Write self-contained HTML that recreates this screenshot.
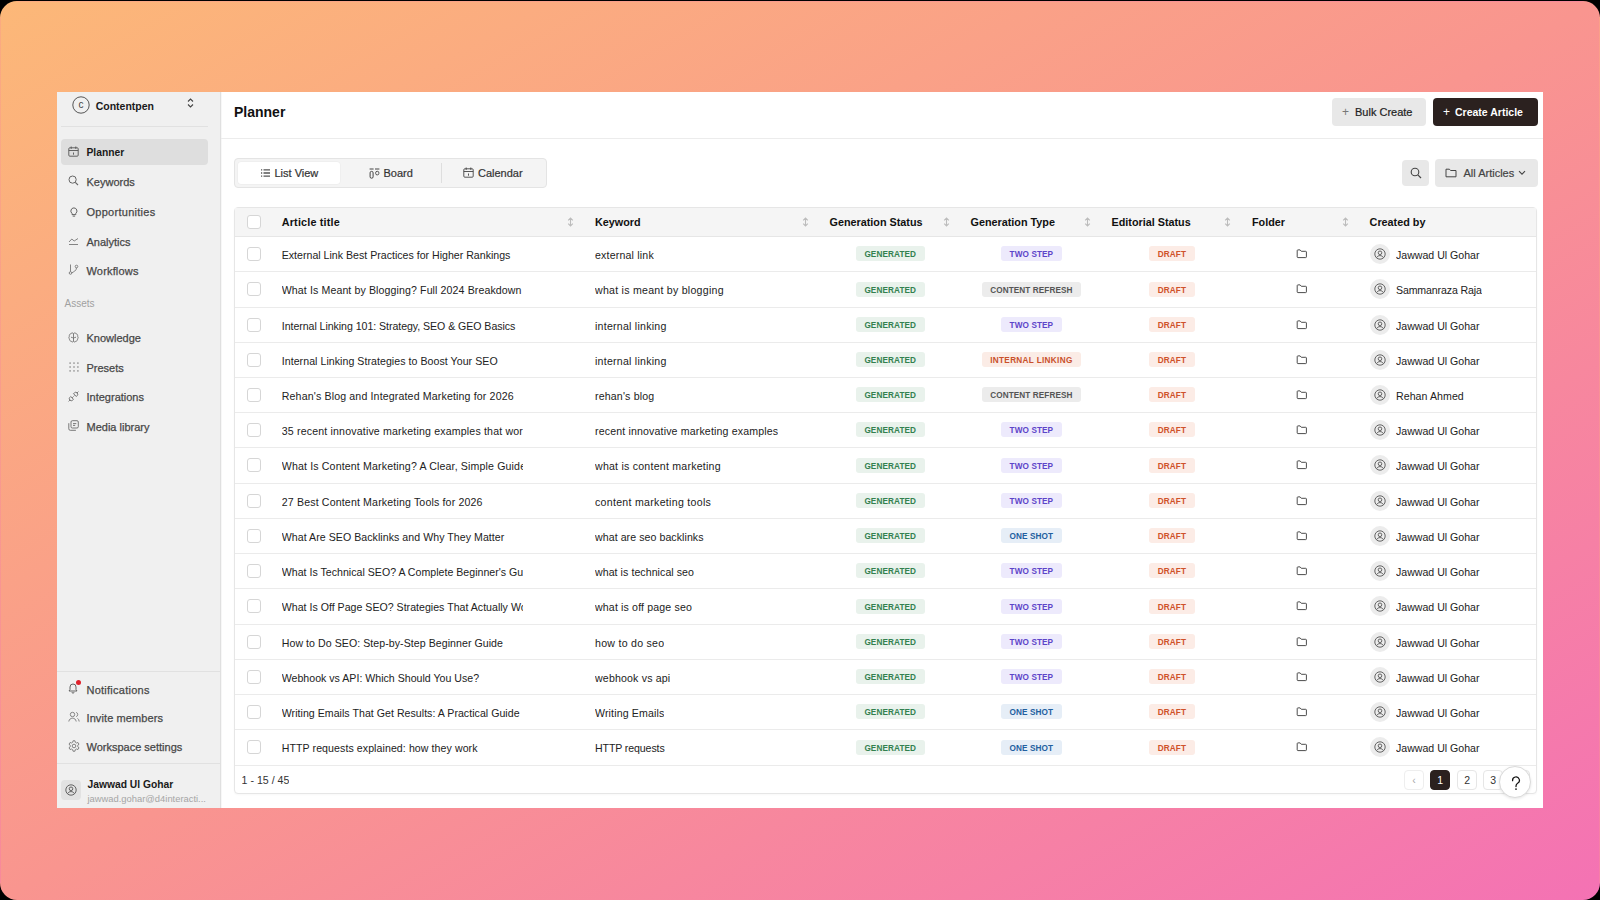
<!DOCTYPE html>
<html><head><meta charset="utf-8">
<style>
*{margin:0;padding:0;box-sizing:border-box}
html,body{width:1600px;height:900px;overflow:hidden;background:#000}
body{position:relative;font-family:"Liberation Sans",sans-serif;color:#1f1f1f}
.frame{position:absolute;left:0;top:1px;width:1600px;height:899px;border-radius:17px;background:linear-gradient(to bottom right,#fcb878 0%,#f9958f 50%,#f472b4 100%)}
.app{position:absolute;left:57px;top:92px;width:1486px;height:716px;background:#fff;overflow:hidden}
.abs{position:absolute}
svg{display:block}
/* sidebar */
.side{position:absolute;left:57px;top:92px;width:164px;height:716px;background:#f0f0f0;border-right:1px solid #e0e0e0;box-shadow:1px 0 0 #f7f7f7;overflow:hidden}
.nav{position:absolute;left:86.5px;font-size:11px;color:#474747;white-space:nowrap;line-height:14px;-webkit-text-stroke:0.25px #474747}
.nico{position:absolute;left:67px}
.sep{position:absolute;height:1px;background:#e1e1e1}
/* main */
.title{position:absolute;left:234px;top:102.6px;font-size:14px;font-weight:bold;color:#111;line-height:18px}
.hdrline{position:absolute;left:221px;top:138px;width:1322px;height:1px;background:#ececec}
.btn{position:absolute;border-radius:4px;font-size:11px;line-height:14px;white-space:nowrap}
.tabs{position:absolute;left:234px;top:158px;width:313px;height:30px;background:#f4f4f4;border:1px solid #e4e4e4;border-radius:4px}
.tab{position:absolute;font-size:11px;color:#333;line-height:14px;white-space:nowrap;-webkit-text-stroke:0.2px #333}
/* table */
.tbl{position:absolute;left:234px;top:207px;width:1303px;height:586.5px;border:1px solid #e6e6e6;border-radius:4px;overflow:hidden;background:#fff;box-shadow:0 1px 2px rgba(0,0,0,0.03)}
.thbg{position:absolute;left:235px;top:208px;width:1301px;height:28px;background:#f5f5f5}
.hline{position:absolute;left:235px;top:236px;width:1301px;height:1px;background:#e6e6e6}
.th{position:absolute;top:215px;font-size:10.8px;font-weight:bold;color:#111;line-height:14px;white-space:nowrap}
.srt{position:absolute;top:217.4px}
.rb{position:absolute;left:235px;width:1301px;height:1px;background:#ebebeb}
.cb{position:absolute;left:247px;width:14px;height:14px;border:1px solid #d6d6d6;border-radius:3px;background:#fff}
.tt{position:absolute;font-size:10.6px;color:#222;line-height:14px;white-space:nowrap;overflow:hidden}
.ttl{left:281.75px;width:241.1px}
.kw{left:595px}
.who{left:1396px}
.bd{position:absolute;height:14.8px;border-radius:3px;font-size:8.2px;font-weight:bold;line-height:18.4px;text-align:center;white-space:nowrap;letter-spacing:0.1px}
.gen{left:856px;width:68.5px;background:#e9f2ec;color:#33814f}
.dr{left:1149.25px;width:45.25px;background:#fcece6;color:#cf5229}
.t2{background:#edeafc;color:#5d45c9}
.tc{background:#ececec;color:#555}
.ti{background:#fbece6;color:#c9502a;letter-spacing:0.33px}
.t1{background:#e6eef7;color:#22609f}
.fo{position:absolute;left:1295.5px}
.av{position:absolute;left:1369.5px;width:20px;height:20px;border-radius:50%;background:#ececec;display:flex;align-items:center;justify-content:center}
.pg{position:absolute;top:769.5px;width:19.5px;height:20px;border:1px solid #e6e6e6;border-radius:4px;font-size:10.5px;line-height:18px;text-align:center;color:#333;background:#fff}
</style></head>
<body>
<div class="frame"></div>
<div class="abs" style="left:0;top:17px;width:1px;height:866px;background:linear-gradient(to bottom,#fbab80,#faa287,#f99a8e,#f89295,#f8899b)"></div>
<div class="abs" style="left:1599px;top:17px;width:1px;height:866px;background:linear-gradient(to bottom,#faa188,#f99890,#f89097,#f7889e,#f67fa7)"></div>
<div class="abs" style="left:17px;top:1px;width:1566px;height:1px;background:linear-gradient(to right,#fbab81,#faa387,#f99a8e,#f89295,#f7899c)"></div>
<div class="app"></div>

<!-- SIDEBAR -->
<div class="side"></div>
<svg class="abs" style="left:71.5px;top:96px" width="18" height="18" viewBox="0 0 18 18"><circle cx="9" cy="9" r="8.2" fill="none" stroke="#555" stroke-width="1"/><text x="9" y="12.4" font-size="10" text-anchor="middle" fill="#444" font-family="Liberation Sans">c</text></svg>
<div class="nav" style="left:95.7px;top:98.5px;font-weight:bold;color:#1a1a1a;font-size:10.5px;-webkit-text-stroke:0">Contentpen</div>
<svg class="abs" style="left:187px;top:98px" width="7" height="10" viewBox="0 0 7 10"><path d="M1 3.5L3.5 1 6 3.5M1 6.5L3.5 9 6 6.5" fill="none" stroke="#444" stroke-width="1.1"/></svg>
<div class="sep" style="left:61px;top:126px;width:147px"></div>

<div class="abs" style="left:61px;top:139.2px;width:146.7px;height:25.5px;background:#dedede;border-radius:4px"></div>
<!-- planner icon -->
<svg class="nico" style="top:146px;left:68px" width="11" height="11" viewBox="0 0 11 11"><rect x="0.8" y="1.8" width="9.4" height="8.4" rx="1" fill="none" stroke="#555" stroke-width="0.9"/><path d="M0.8 4.5h9.4M3.2 0.5v2.4M7.8 0.5v2.4M5.5 6.5v2.2" fill="none" stroke="#555" stroke-width="0.9"/></svg>
<div class="nav" style="top:145.5px;color:#1a1a1a;font-weight:bold;font-size:10.3px;-webkit-text-stroke:0">Planner</div>

<svg class="nico" style="top:175px;left:68px" width="11" height="11" viewBox="0 0 11 11"><circle cx="4.6" cy="4.6" r="3.6" fill="none" stroke="#666" stroke-width="1"/><path d="M7.3 7.3L10 10" stroke="#666" stroke-width="1.1"/></svg>
<div class="nav" style="top:174.5px">Keywords</div>

<svg class="nico" style="top:206.5px;left:69px" width="10" height="10" viewBox="0 0 10 10"><path d="M4.9 0.9a3.1 3.1 0 0 1 1.9 5.5v1.2H3V6.4A3.1 3.1 0 0 1 4.9 0.9zM3.7 9.1h2.4" fill="none" stroke="#5a5a5a" stroke-width="0.95" stroke-linejoin="round"/></svg>
<div class="nav" style="top:204.5px;letter-spacing:0.27px">Opportunities</div>

<svg class="nico" style="top:235px;left:68px" width="11" height="11" viewBox="0 0 11 11"><path d="M1 9.5h9M1 7l2.8-3 2.4 2L10 3.5" fill="none" stroke="#777" stroke-width="0.9"/></svg>
<div class="nav" style="top:234.5px">Analytics</div>

<svg class="nico" style="top:264px;left:68px" width="11" height="11" viewBox="0 0 11 11"><circle cx="2.5" cy="9" r="1.3" fill="none" stroke="#777" stroke-width="0.9"/><circle cx="8.5" cy="2.5" r="1.3" fill="none" stroke="#777" stroke-width="0.9"/><path d="M2.5 0.5v7.2M8.5 3.8c0 3-3 4-4.6 5" fill="none" stroke="#777" stroke-width="0.9"/></svg>
<div class="nav" style="top:264px;letter-spacing:0.17px">Workflows</div>

<div class="nav" style="left:64.5px;top:297px;color:#a0a0a0;font-size:10px;-webkit-text-stroke:0">Assets</div>

<svg class="nico" style="top:331.6px;left:68px" width="11" height="11" viewBox="0 0 11 11"><path d="M5.5 1.6C5 0.7 3.2 0.6 2.7 1.9 1.5 2 1 3.3 1.5 4.2 0.6 4.9 0.7 6.4 1.6 6.9 1.2 8 2 9.3 3.2 9.1 3.7 10.2 5 10.3 5.5 9.3 6 10.3 7.3 10.2 7.8 9.1 9 9.3 9.8 8 9.4 6.9 10.3 6.4 10.4 4.9 9.5 4.2 10 3.3 9.5 2 8.3 1.9 7.8 0.6 6 0.7 5.5 1.6zM5.5 1.6v7.7M3 5.2c1 0 1.8 0.5 2.5 1.3M8 5.2c-1 0-1.8 0.5-2.5 1.3" fill="none" stroke="#6a6a6a" stroke-width="0.85" stroke-linejoin="round"/></svg>
<div class="nav" style="top:331px">Knowledge</div>

<svg class="nico" style="top:361.5px;left:68.5px" width="10" height="10" viewBox="0 0 10 10"><g fill="#8a8a8a"><rect x="0.4" y="0.4" width="1.4" height="1.4"/><rect x="4.3" y="0.4" width="1.4" height="1.4"/><rect x="8.2" y="0.4" width="1.4" height="1.4"/><rect x="0.4" y="4.3" width="1.4" height="1.4"/><rect x="4.3" y="4.3" width="1.4" height="1.4"/><rect x="8.2" y="4.3" width="1.4" height="1.4"/><rect x="0.4" y="8.2" width="1.4" height="1.4"/><rect x="4.3" y="8.2" width="1.4" height="1.4"/><rect x="8.2" y="8.2" width="1.4" height="1.4"/></g></svg>
<div class="nav" style="top:360.5px">Presets</div>

<svg class="nico" style="top:390.8px;left:68px" width="11" height="11" viewBox="0 0 11 11"><path d="M0.6 10.4l1.3-1.3M1.9 9.1a2 2 0 0 0 2.8 0l0.8-0.8-2.8-2.8-0.8 0.8a2 2 0 0 0 0 2.8zM4.2 6.8l0.9-0.9M5.5 5.5L6.4 4.6M10.4 0.6L9.1 1.9M9.1 1.9a2 2 0 0 0-2.8 0L5.5 2.7l2.8 2.8 0.8-0.8a2 2 0 0 0 0-2.8z" fill="none" stroke="#666" stroke-width="0.9" stroke-linejoin="round"/></svg>
<div class="nav" style="top:390px">Integrations</div>

<svg class="nico" style="top:420.3px;left:68px" width="11" height="11" viewBox="0 0 11 11"><rect x="3" y="0.7" width="7.3" height="7.3" rx="1.3" fill="none" stroke="#6a6a6a" stroke-width="0.9"/><path d="M0.8 3.2v5.6a1.5 1.5 0 0 0 1.5 1.5h5.6M5 3.6h3.3M5 5.4h2.2" fill="none" stroke="#6a6a6a" stroke-width="0.9"/></svg>
<div class="nav" style="top:419.5px">Media library</div>

<div class="sep" style="left:57px;top:671px;width:163px"></div>
<svg class="nico" style="top:682px;left:68px" width="12" height="12" viewBox="0 0 12 12"><path d="M5 2a3 3 0 0 1 3 3v2.5l1 1.5H1l1-1.5V5a3 3 0 0 1 3-3zM4 10.2a1 1 0 0 0 2 0" fill="none" stroke="#555" stroke-width="0.9"/></svg>
<div class="abs" style="left:75.8px;top:679.8px;width:5px;height:5px;border-radius:50%;background:#e0212b"></div>
<div class="nav" style="top:682.5px;letter-spacing:0.25px">Notifications</div>

<svg class="nico" style="top:711px;left:68px" width="12" height="12" viewBox="0 0 12 12"><circle cx="4.5" cy="3.5" r="2.2" fill="none" stroke="#777" stroke-width="0.9"/><path d="M0.8 10.5c0.4-2.2 1.8-3.3 3.7-3.3s3.3 1.1 3.7 3.3M8.2 1.4a2.2 2.2 0 0 1 0 4.2M9.5 7.4c1 0.6 1.5 1.6 1.7 3.1" fill="none" stroke="#777" stroke-width="0.9"/></svg>
<div class="nav" style="top:710.5px;letter-spacing:0.1px">Invite members</div>

<svg class="nico" style="top:740px;left:68px" width="12" height="12" viewBox="0 0 12 12"><circle cx="6" cy="6" r="1.8" fill="none" stroke="#777" stroke-width="0.9"/><path d="M5 0.8h2l0.3 1.5 1.2 0.7 1.5-0.5 1 1.7-1.2 1v1.6l1.2 1-1 1.7-1.5-0.5-1.2 0.7L7 11.2H5l-0.3-1.5-1.2-0.7-1.5 0.5-1-1.7 1.2-1V5.2L1 4.2l1-1.7 1.5 0.5 1.2-0.7z" fill="none" stroke="#777" stroke-width="0.9" stroke-linejoin="round"/></svg>
<div class="nav" style="top:739.5px">Workspace settings</div>

<div class="sep" style="left:57px;top:763px;width:163px"></div>
<div class="abs" style="left:61px;top:780px;width:20px;height:20px;border-radius:4px;background:#e2e2e2"></div>
<svg class="abs" style="left:65px;top:784px" width="12" height="12" viewBox="0 0 12 12"><circle cx="6" cy="6" r="5.2" fill="none" stroke="#555" stroke-width="0.9"/><circle cx="6" cy="4.8" r="1.8" fill="none" stroke="#555" stroke-width="0.9"/><path d="M2.6 9.6c0.8-1.4 2-2 3.4-2s2.6 0.6 3.4 2" fill="none" stroke="#555" stroke-width="0.9"/></svg>
<div class="nav" style="left:87.5px;top:778px;font-weight:bold;color:#1a1a1a;font-size:10.3px;-webkit-text-stroke:0">Jawwad Ul Gohar</div>
<div class="nav" style="left:87.5px;top:792px;color:#a5a5a5;font-size:9.4px;-webkit-text-stroke:0">jawwad.gohar@d4interacti...</div>

<!-- MAIN HEADER -->
<div class="title">Planner</div>
<div class="hdrline"></div>
<div class="btn" style="left:1332px;top:98px;width:94px;height:27.6px;background:#e8e8e8;color:#222"><span class="abs" style="left:10px;top:6.5px;color:#777;font-size:12px">+</span><span class="abs" style="left:23px;top:6.8px;-webkit-text-stroke:0.2px #222">Bulk Create</span></div>
<div class="btn" style="left:1433px;top:98px;width:104.5px;height:27.6px;background:#2b211f;color:#fff"><span class="abs" style="left:10px;top:6.5px;font-size:12px">+</span><span class="abs" style="left:22px;top:6.8px;font-weight:bold;font-size:10.5px">Create Article</span></div>

<!-- TABS -->
<div class="tabs"></div>
<div class="abs" style="left:237.8px;top:162px;width:101.8px;height:22.4px;background:#fff;border-radius:3px;box-shadow:0 0 0 0.5px rgba(0,0,0,0.04)"></div>
<svg class="abs" style="left:260px;top:168px" width="11" height="10" viewBox="0 0 11 10"><path d="M1 1.8h1.2M1 5h1.2M1 8.2h1.2M3.5 1.8h6.5M3.5 5h6.5M3.5 8.2h6.5" stroke="#555" stroke-width="1.3"/></svg>
<div class="tab" style="left:274.5px;top:166px">List View</div>
<svg class="abs" style="left:368.5px;top:167.5px" width="11" height="11" viewBox="0 0 11 11"><path d="M0.6 1h4M6 1h4.4" stroke="#444" stroke-width="1"/><rect x="1.1" y="3.4" width="3" height="6.8" rx="1.4" fill="none" stroke="#444" stroke-width="1"/><rect x="6.6" y="3.3" width="3.3" height="3.6" rx="1.6" fill="none" stroke="#555" stroke-width="1"/></svg>
<div class="tab" style="left:383.5px;top:166px">Board</div>
<div class="abs" style="left:441px;top:163px;width:1px;height:20px;background:#dedede"></div>
<svg class="abs" style="left:463px;top:167px" width="11" height="11" viewBox="0 0 11 11"><rect x="0.8" y="1.8" width="9.4" height="8.4" rx="1" fill="none" stroke="#444" stroke-width="0.9"/><path d="M0.8 4.5h9.4M3.2 0.5v2.4M7.8 0.5v2.4M5.5 6.5v2.2" fill="none" stroke="#444" stroke-width="0.9"/></svg>
<div class="tab" style="left:478px;top:166px">Calendar</div>

<div class="btn" style="left:1402px;top:160px;width:27px;height:26px;background:#e8e8e8"></div>
<svg class="abs" style="left:1409.5px;top:167px" width="12" height="12" viewBox="0 0 12 12"><circle cx="5" cy="5" r="3.8" fill="none" stroke="#444" stroke-width="1.1"/><path d="M7.8 7.8L11 11" stroke="#444" stroke-width="1.2"/></svg>
<div class="btn" style="left:1435px;top:159px;width:102.5px;height:27.7px;background:#e8e8e8;color:#444"></div>
<svg class="abs" style="left:1444.5px;top:167.5px" width="12" height="10" viewBox="0 0 12 10"><path d="M1 1.2h3.4l1.2 1.3H11v6.3H1z" fill="none" stroke="#444" stroke-width="1" stroke-linejoin="round"/></svg>
<div class="tab" style="left:1463.5px;top:166px;color:#444;-webkit-text-stroke:0.2px #444">All Articles</div>
<svg class="abs" style="left:1517.5px;top:169.5px" width="8" height="6" viewBox="0 0 8 6"><path d="M1 1.2l3 3 3-3" fill="none" stroke="#444" stroke-width="1.1"/></svg>

<!-- TABLE -->
<div class="tbl"></div>
<div class="thbg"></div>
<div class="hline"></div>
<div class="cb" style="top:215px"></div>
<div class="th" style="left:281.75px;letter-spacing:0.18px">Article title</div>
<div class="srt" style="left:567px"><svg width="7" height="10" viewBox="0 0 7 10"><path d="M3.5 1v8M1.2 3.3L3.5 1 5.8 3.3M1.2 6.7L3.5 9 5.8 6.7" fill="none" stroke="#bcbcbc" stroke-width="1.1"/></svg></div>
<div class="th" style="left:595px">Keyword</div>
<div class="srt" style="left:802px"><svg width="7" height="10" viewBox="0 0 7 10"><path d="M3.5 1v8M1.2 3.3L3.5 1 5.8 3.3M1.2 6.7L3.5 9 5.8 6.7" fill="none" stroke="#bcbcbc" stroke-width="1.1"/></svg></div>
<div class="th" style="left:829.5px">Generation Status</div>
<div class="srt" style="left:942.5px"><svg width="7" height="10" viewBox="0 0 7 10"><path d="M3.5 1v8M1.2 3.3L3.5 1 5.8 3.3M1.2 6.7L3.5 9 5.8 6.7" fill="none" stroke="#bcbcbc" stroke-width="1.1"/></svg></div>
<div class="th" style="left:970.5px">Generation Type</div>
<div class="srt" style="left:1083.5px"><svg width="7" height="10" viewBox="0 0 7 10"><path d="M3.5 1v8M1.2 3.3L3.5 1 5.8 3.3M1.2 6.7L3.5 9 5.8 6.7" fill="none" stroke="#bcbcbc" stroke-width="1.1"/></svg></div>
<div class="th" style="left:1111.5px">Editorial Status</div>
<div class="srt" style="left:1224px"><svg width="7" height="10" viewBox="0 0 7 10"><path d="M3.5 1v8M1.2 3.3L3.5 1 5.8 3.3M1.2 6.7L3.5 9 5.8 6.7" fill="none" stroke="#bcbcbc" stroke-width="1.1"/></svg></div>
<div class="th" style="left:1252px">Folder</div>
<div class="srt" style="left:1341.5px"><svg width="7" height="10" viewBox="0 0 7 10"><path d="M3.5 1v8M1.2 3.3L3.5 1 5.8 3.3M1.2 6.7L3.5 9 5.8 6.7" fill="none" stroke="#bcbcbc" stroke-width="1.1"/></svg></div>
<div class="th" style="left:1369.6px">Created by</div>

<div class="rb" style="top:271.00px"></div>
<div class="cb" style="top:247.00px"></div>
<div class="tt ttl" style="top:248.00px"><span style="letter-spacing:0.004px">External Link Best Practices for Higher Rankings</span></div>
<div class="tt kw" style="top:248.00px"><span style="letter-spacing:0.182px">external link</span></div>
<div class="bd gen" style="top:246.40px">GENERATED</div>
<div class="bd t2" style="top:246.40px;left:1001.03px;width:60.75px">TWO STEP</div>
<div class="bd dr" style="top:246.40px">DRAFT</div>
<div class="fo" style="top:248.70px"><svg width="12" height="10" viewBox="0 0 12 10"><path d="M1.2 1.6Q1.2 0.9 1.9 0.9H4.1L5.3 2.3H9.7Q10.4 2.3 10.4 3V7.9Q10.4 8.6 9.7 8.6H1.9Q1.2 8.6 1.2 7.9Z" fill="none" stroke="#4d4d4d" stroke-width="1"/></svg></div>
<div class="av" style="top:244.00px"><svg width="12" height="12" viewBox="0 0 12 12"><circle cx="6" cy="6" r="5.2" fill="none" stroke="#555" stroke-width="0.9"/><circle cx="6" cy="4.8" r="1.8" fill="none" stroke="#555" stroke-width="0.9"/><path d="M2.6 9.6c0.8-1.4 2-2 3.4-2s2.6 0.6 3.4 2" fill="none" stroke="#555" stroke-width="0.9"/></svg></div>
<div class="tt who" style="top:248.00px"><span style="letter-spacing:-0.007px">Jawwad Ul Gohar</span></div>
<div class="rb" style="top:307.00px"></div>
<div class="cb" style="top:282.00px"></div>
<div class="tt ttl" style="top:283.00px"><span style="letter-spacing:0.106px">What Is Meant by Blogging? Full 2024 Breakdown</span></div>
<div class="tt kw" style="top:283.00px"><span style="letter-spacing:0.252px">what is meant by blogging</span></div>
<div class="bd gen" style="top:281.90px">GENERATED</div>
<div class="bd tc" style="top:281.90px;left:982.28px;width:98.25px">CONTENT REFRESH</div>
<div class="bd dr" style="top:281.90px">DRAFT</div>
<div class="fo" style="top:283.70px"><svg width="12" height="10" viewBox="0 0 12 10"><path d="M1.2 1.6Q1.2 0.9 1.9 0.9H4.1L5.3 2.3H9.7Q10.4 2.3 10.4 3V7.9Q10.4 8.6 9.7 8.6H1.9Q1.2 8.6 1.2 7.9Z" fill="none" stroke="#4d4d4d" stroke-width="1"/></svg></div>
<div class="av" style="top:279.00px"><svg width="12" height="12" viewBox="0 0 12 12"><circle cx="6" cy="6" r="5.2" fill="none" stroke="#555" stroke-width="0.9"/><circle cx="6" cy="4.8" r="1.8" fill="none" stroke="#555" stroke-width="0.9"/><path d="M2.6 9.6c0.8-1.4 2-2 3.4-2s2.6 0.6 3.4 2" fill="none" stroke="#555" stroke-width="0.9"/></svg></div>
<div class="tt who" style="top:283.00px"><span style="letter-spacing:-0.136px">Sammanraza Raja</span></div>
<div class="rb" style="top:342.00px"></div>
<div class="cb" style="top:318.00px"></div>
<div class="tt ttl" style="top:319.00px"><span style="letter-spacing:-0.050px">Internal Linking 101: Strategy, SEO &amp; GEO Basics</span></div>
<div class="tt kw" style="top:319.00px"><span style="letter-spacing:0.242px">internal linking</span></div>
<div class="bd gen" style="top:317.40px">GENERATED</div>
<div class="bd t2" style="top:317.40px;left:1001.03px;width:60.75px">TWO STEP</div>
<div class="bd dr" style="top:317.40px">DRAFT</div>
<div class="fo" style="top:319.70px"><svg width="12" height="10" viewBox="0 0 12 10"><path d="M1.2 1.6Q1.2 0.9 1.9 0.9H4.1L5.3 2.3H9.7Q10.4 2.3 10.4 3V7.9Q10.4 8.6 9.7 8.6H1.9Q1.2 8.6 1.2 7.9Z" fill="none" stroke="#4d4d4d" stroke-width="1"/></svg></div>
<div class="av" style="top:315.00px"><svg width="12" height="12" viewBox="0 0 12 12"><circle cx="6" cy="6" r="5.2" fill="none" stroke="#555" stroke-width="0.9"/><circle cx="6" cy="4.8" r="1.8" fill="none" stroke="#555" stroke-width="0.9"/><path d="M2.6 9.6c0.8-1.4 2-2 3.4-2s2.6 0.6 3.4 2" fill="none" stroke="#555" stroke-width="0.9"/></svg></div>
<div class="tt who" style="top:319.00px"><span style="letter-spacing:-0.007px">Jawwad Ul Gohar</span></div>
<div class="rb" style="top:377.00px"></div>
<div class="cb" style="top:353.00px"></div>
<div class="tt ttl" style="top:354.00px"><span style="letter-spacing:0.048px">Internal Linking Strategies to Boost Your SEO</span></div>
<div class="tt kw" style="top:354.00px"><span style="letter-spacing:0.242px">internal linking</span></div>
<div class="bd gen" style="top:352.40px">GENERATED</div>
<div class="bd ti" style="top:352.40px;left:981.65px;width:99.5px">INTERNAL LINKING</div>
<div class="bd dr" style="top:352.40px">DRAFT</div>
<div class="fo" style="top:354.70px"><svg width="12" height="10" viewBox="0 0 12 10"><path d="M1.2 1.6Q1.2 0.9 1.9 0.9H4.1L5.3 2.3H9.7Q10.4 2.3 10.4 3V7.9Q10.4 8.6 9.7 8.6H1.9Q1.2 8.6 1.2 7.9Z" fill="none" stroke="#4d4d4d" stroke-width="1"/></svg></div>
<div class="av" style="top:350.00px"><svg width="12" height="12" viewBox="0 0 12 12"><circle cx="6" cy="6" r="5.2" fill="none" stroke="#555" stroke-width="0.9"/><circle cx="6" cy="4.8" r="1.8" fill="none" stroke="#555" stroke-width="0.9"/><path d="M2.6 9.6c0.8-1.4 2-2 3.4-2s2.6 0.6 3.4 2" fill="none" stroke="#555" stroke-width="0.9"/></svg></div>
<div class="tt who" style="top:354.00px"><span style="letter-spacing:-0.007px">Jawwad Ul Gohar</span></div>
<div class="rb" style="top:412.00px"></div>
<div class="cb" style="top:388.00px"></div>
<div class="tt ttl" style="top:389.00px"><span style="letter-spacing:0.148px">Rehan's Blog and Integrated Marketing for 2026</span></div>
<div class="tt kw" style="top:389.00px"><span style="letter-spacing:0.159px">rehan's blog</span></div>
<div class="bd gen" style="top:387.40px">GENERATED</div>
<div class="bd tc" style="top:387.40px;left:982.28px;width:98.25px">CONTENT REFRESH</div>
<div class="bd dr" style="top:387.40px">DRAFT</div>
<div class="fo" style="top:389.70px"><svg width="12" height="10" viewBox="0 0 12 10"><path d="M1.2 1.6Q1.2 0.9 1.9 0.9H4.1L5.3 2.3H9.7Q10.4 2.3 10.4 3V7.9Q10.4 8.6 9.7 8.6H1.9Q1.2 8.6 1.2 7.9Z" fill="none" stroke="#4d4d4d" stroke-width="1"/></svg></div>
<div class="av" style="top:385.00px"><svg width="12" height="12" viewBox="0 0 12 12"><circle cx="6" cy="6" r="5.2" fill="none" stroke="#555" stroke-width="0.9"/><circle cx="6" cy="4.8" r="1.8" fill="none" stroke="#555" stroke-width="0.9"/><path d="M2.6 9.6c0.8-1.4 2-2 3.4-2s2.6 0.6 3.4 2" fill="none" stroke="#555" stroke-width="0.9"/></svg></div>
<div class="tt who" style="top:389.00px"><span style="letter-spacing:0.059px">Rehan Ahmed</span></div>
<div class="rb" style="top:447.00px"></div>
<div class="cb" style="top:423.00px"></div>
<div class="tt ttl" style="top:424.00px"><span style="letter-spacing:0.168px">35 recent innovative marketing examples that wor</span></div>
<div class="tt kw" style="top:424.00px"><span style="letter-spacing:0.149px">recent innovative marketing examples</span></div>
<div class="bd gen" style="top:422.40px">GENERATED</div>
<div class="bd t2" style="top:422.40px;left:1001.03px;width:60.75px">TWO STEP</div>
<div class="bd dr" style="top:422.40px">DRAFT</div>
<div class="fo" style="top:424.70px"><svg width="12" height="10" viewBox="0 0 12 10"><path d="M1.2 1.6Q1.2 0.9 1.9 0.9H4.1L5.3 2.3H9.7Q10.4 2.3 10.4 3V7.9Q10.4 8.6 9.7 8.6H1.9Q1.2 8.6 1.2 7.9Z" fill="none" stroke="#4d4d4d" stroke-width="1"/></svg></div>
<div class="av" style="top:420.00px"><svg width="12" height="12" viewBox="0 0 12 12"><circle cx="6" cy="6" r="5.2" fill="none" stroke="#555" stroke-width="0.9"/><circle cx="6" cy="4.8" r="1.8" fill="none" stroke="#555" stroke-width="0.9"/><path d="M2.6 9.6c0.8-1.4 2-2 3.4-2s2.6 0.6 3.4 2" fill="none" stroke="#555" stroke-width="0.9"/></svg></div>
<div class="tt who" style="top:424.00px"><span style="letter-spacing:-0.007px">Jawwad Ul Gohar</span></div>
<div class="rb" style="top:483.00px"></div>
<div class="cb" style="top:458.00px"></div>
<div class="tt ttl" style="top:459.00px"><span style="letter-spacing:0.149px">What Is Content Marketing? A Clear, Simple Guide</span></div>
<div class="tt kw" style="top:459.00px"><span style="letter-spacing:0.227px">what is content marketing</span></div>
<div class="bd gen" style="top:457.90px">GENERATED</div>
<div class="bd t2" style="top:457.90px;left:1001.03px;width:60.75px">TWO STEP</div>
<div class="bd dr" style="top:457.90px">DRAFT</div>
<div class="fo" style="top:459.70px"><svg width="12" height="10" viewBox="0 0 12 10"><path d="M1.2 1.6Q1.2 0.9 1.9 0.9H4.1L5.3 2.3H9.7Q10.4 2.3 10.4 3V7.9Q10.4 8.6 9.7 8.6H1.9Q1.2 8.6 1.2 7.9Z" fill="none" stroke="#4d4d4d" stroke-width="1"/></svg></div>
<div class="av" style="top:455.00px"><svg width="12" height="12" viewBox="0 0 12 12"><circle cx="6" cy="6" r="5.2" fill="none" stroke="#555" stroke-width="0.9"/><circle cx="6" cy="4.8" r="1.8" fill="none" stroke="#555" stroke-width="0.9"/><path d="M2.6 9.6c0.8-1.4 2-2 3.4-2s2.6 0.6 3.4 2" fill="none" stroke="#555" stroke-width="0.9"/></svg></div>
<div class="tt who" style="top:459.00px"><span style="letter-spacing:-0.007px">Jawwad Ul Gohar</span></div>
<div class="rb" style="top:518.00px"></div>
<div class="cb" style="top:494.00px"></div>
<div class="tt ttl" style="top:495.00px"><span style="letter-spacing:0.153px">27 Best Content Marketing Tools for 2026</span></div>
<div class="tt kw" style="top:495.00px"><span style="letter-spacing:0.286px">content marketing tools</span></div>
<div class="bd gen" style="top:493.40px">GENERATED</div>
<div class="bd t2" style="top:493.40px;left:1001.03px;width:60.75px">TWO STEP</div>
<div class="bd dr" style="top:493.40px">DRAFT</div>
<div class="fo" style="top:495.70px"><svg width="12" height="10" viewBox="0 0 12 10"><path d="M1.2 1.6Q1.2 0.9 1.9 0.9H4.1L5.3 2.3H9.7Q10.4 2.3 10.4 3V7.9Q10.4 8.6 9.7 8.6H1.9Q1.2 8.6 1.2 7.9Z" fill="none" stroke="#4d4d4d" stroke-width="1"/></svg></div>
<div class="av" style="top:491.00px"><svg width="12" height="12" viewBox="0 0 12 12"><circle cx="6" cy="6" r="5.2" fill="none" stroke="#555" stroke-width="0.9"/><circle cx="6" cy="4.8" r="1.8" fill="none" stroke="#555" stroke-width="0.9"/><path d="M2.6 9.6c0.8-1.4 2-2 3.4-2s2.6 0.6 3.4 2" fill="none" stroke="#555" stroke-width="0.9"/></svg></div>
<div class="tt who" style="top:495.00px"><span style="letter-spacing:-0.007px">Jawwad Ul Gohar</span></div>
<div class="rb" style="top:553.00px"></div>
<div class="cb" style="top:529.00px"></div>
<div class="tt ttl" style="top:530.00px"><span style="letter-spacing:0.047px">What Are SEO Backlinks and Why They Matter</span></div>
<div class="tt kw" style="top:530.00px"><span style="letter-spacing:0.065px">what are seo backlinks</span></div>
<div class="bd gen" style="top:528.40px">GENERATED</div>
<div class="bd t1" style="top:528.40px;left:1001.15px;width:60.5px">ONE SHOT</div>
<div class="bd dr" style="top:528.40px">DRAFT</div>
<div class="fo" style="top:530.70px"><svg width="12" height="10" viewBox="0 0 12 10"><path d="M1.2 1.6Q1.2 0.9 1.9 0.9H4.1L5.3 2.3H9.7Q10.4 2.3 10.4 3V7.9Q10.4 8.6 9.7 8.6H1.9Q1.2 8.6 1.2 7.9Z" fill="none" stroke="#4d4d4d" stroke-width="1"/></svg></div>
<div class="av" style="top:526.00px"><svg width="12" height="12" viewBox="0 0 12 12"><circle cx="6" cy="6" r="5.2" fill="none" stroke="#555" stroke-width="0.9"/><circle cx="6" cy="4.8" r="1.8" fill="none" stroke="#555" stroke-width="0.9"/><path d="M2.6 9.6c0.8-1.4 2-2 3.4-2s2.6 0.6 3.4 2" fill="none" stroke="#555" stroke-width="0.9"/></svg></div>
<div class="tt who" style="top:530.00px"><span style="letter-spacing:-0.007px">Jawwad Ul Gohar</span></div>
<div class="rb" style="top:588.00px"></div>
<div class="cb" style="top:564.00px"></div>
<div class="tt ttl" style="top:565.00px"><span style="letter-spacing:0.012px">What Is Technical SEO? A Complete Beginner's Gu</span></div>
<div class="tt kw" style="top:565.00px"><span style="letter-spacing:0.060px">what is technical seo</span></div>
<div class="bd gen" style="top:563.40px">GENERATED</div>
<div class="bd t2" style="top:563.40px;left:1001.03px;width:60.75px">TWO STEP</div>
<div class="bd dr" style="top:563.40px">DRAFT</div>
<div class="fo" style="top:565.70px"><svg width="12" height="10" viewBox="0 0 12 10"><path d="M1.2 1.6Q1.2 0.9 1.9 0.9H4.1L5.3 2.3H9.7Q10.4 2.3 10.4 3V7.9Q10.4 8.6 9.7 8.6H1.9Q1.2 8.6 1.2 7.9Z" fill="none" stroke="#4d4d4d" stroke-width="1"/></svg></div>
<div class="av" style="top:561.00px"><svg width="12" height="12" viewBox="0 0 12 12"><circle cx="6" cy="6" r="5.2" fill="none" stroke="#555" stroke-width="0.9"/><circle cx="6" cy="4.8" r="1.8" fill="none" stroke="#555" stroke-width="0.9"/><path d="M2.6 9.6c0.8-1.4 2-2 3.4-2s2.6 0.6 3.4 2" fill="none" stroke="#555" stroke-width="0.9"/></svg></div>
<div class="tt who" style="top:565.00px"><span style="letter-spacing:-0.007px">Jawwad Ul Gohar</span></div>
<div class="rb" style="top:624.00px"></div>
<div class="cb" style="top:599.00px"></div>
<div class="tt ttl" style="top:600.00px"><span style="letter-spacing:0.010px">What Is Off Page SEO? Strategies That Actually Wo</span></div>
<div class="tt kw" style="top:600.00px"><span style="letter-spacing:0.148px">what is off page seo</span></div>
<div class="bd gen" style="top:598.90px">GENERATED</div>
<div class="bd t2" style="top:598.90px;left:1001.03px;width:60.75px">TWO STEP</div>
<div class="bd dr" style="top:598.90px">DRAFT</div>
<div class="fo" style="top:600.70px"><svg width="12" height="10" viewBox="0 0 12 10"><path d="M1.2 1.6Q1.2 0.9 1.9 0.9H4.1L5.3 2.3H9.7Q10.4 2.3 10.4 3V7.9Q10.4 8.6 9.7 8.6H1.9Q1.2 8.6 1.2 7.9Z" fill="none" stroke="#4d4d4d" stroke-width="1"/></svg></div>
<div class="av" style="top:596.00px"><svg width="12" height="12" viewBox="0 0 12 12"><circle cx="6" cy="6" r="5.2" fill="none" stroke="#555" stroke-width="0.9"/><circle cx="6" cy="4.8" r="1.8" fill="none" stroke="#555" stroke-width="0.9"/><path d="M2.6 9.6c0.8-1.4 2-2 3.4-2s2.6 0.6 3.4 2" fill="none" stroke="#555" stroke-width="0.9"/></svg></div>
<div class="tt who" style="top:600.00px"><span style="letter-spacing:-0.007px">Jawwad Ul Gohar</span></div>
<div class="rb" style="top:659.00px"></div>
<div class="cb" style="top:635.00px"></div>
<div class="tt ttl" style="top:636.00px"><span style="letter-spacing:0.052px">How to Do SEO: Step-by-Step Beginner Guide</span></div>
<div class="tt kw" style="top:636.00px"><span style="letter-spacing:0.264px">how to do seo</span></div>
<div class="bd gen" style="top:634.40px">GENERATED</div>
<div class="bd t2" style="top:634.40px;left:1001.03px;width:60.75px">TWO STEP</div>
<div class="bd dr" style="top:634.40px">DRAFT</div>
<div class="fo" style="top:636.70px"><svg width="12" height="10" viewBox="0 0 12 10"><path d="M1.2 1.6Q1.2 0.9 1.9 0.9H4.1L5.3 2.3H9.7Q10.4 2.3 10.4 3V7.9Q10.4 8.6 9.7 8.6H1.9Q1.2 8.6 1.2 7.9Z" fill="none" stroke="#4d4d4d" stroke-width="1"/></svg></div>
<div class="av" style="top:632.00px"><svg width="12" height="12" viewBox="0 0 12 12"><circle cx="6" cy="6" r="5.2" fill="none" stroke="#555" stroke-width="0.9"/><circle cx="6" cy="4.8" r="1.8" fill="none" stroke="#555" stroke-width="0.9"/><path d="M2.6 9.6c0.8-1.4 2-2 3.4-2s2.6 0.6 3.4 2" fill="none" stroke="#555" stroke-width="0.9"/></svg></div>
<div class="tt who" style="top:636.00px"><span style="letter-spacing:-0.007px">Jawwad Ul Gohar</span></div>
<div class="rb" style="top:694.00px"></div>
<div class="cb" style="top:670.00px"></div>
<div class="tt ttl" style="top:671.00px"><span style="letter-spacing:0.007px">Webhook vs API: Which Should You Use?</span></div>
<div class="tt kw" style="top:671.00px"><span style="letter-spacing:0.169px">webhook vs api</span></div>
<div class="bd gen" style="top:669.40px">GENERATED</div>
<div class="bd t2" style="top:669.40px;left:1001.03px;width:60.75px">TWO STEP</div>
<div class="bd dr" style="top:669.40px">DRAFT</div>
<div class="fo" style="top:671.70px"><svg width="12" height="10" viewBox="0 0 12 10"><path d="M1.2 1.6Q1.2 0.9 1.9 0.9H4.1L5.3 2.3H9.7Q10.4 2.3 10.4 3V7.9Q10.4 8.6 9.7 8.6H1.9Q1.2 8.6 1.2 7.9Z" fill="none" stroke="#4d4d4d" stroke-width="1"/></svg></div>
<div class="av" style="top:667.00px"><svg width="12" height="12" viewBox="0 0 12 12"><circle cx="6" cy="6" r="5.2" fill="none" stroke="#555" stroke-width="0.9"/><circle cx="6" cy="4.8" r="1.8" fill="none" stroke="#555" stroke-width="0.9"/><path d="M2.6 9.6c0.8-1.4 2-2 3.4-2s2.6 0.6 3.4 2" fill="none" stroke="#555" stroke-width="0.9"/></svg></div>
<div class="tt who" style="top:671.00px"><span style="letter-spacing:-0.007px">Jawwad Ul Gohar</span></div>
<div class="rb" style="top:729.00px"></div>
<div class="cb" style="top:705.00px"></div>
<div class="tt ttl" style="top:706.00px"><span style="letter-spacing:0.031px">Writing Emails That Get Results: A Practical Guide</span></div>
<div class="tt kw" style="top:706.00px"><span style="letter-spacing:0.136px">Writing Emails</span></div>
<div class="bd gen" style="top:704.40px">GENERATED</div>
<div class="bd t1" style="top:704.40px;left:1001.15px;width:60.5px">ONE SHOT</div>
<div class="bd dr" style="top:704.40px">DRAFT</div>
<div class="fo" style="top:706.70px"><svg width="12" height="10" viewBox="0 0 12 10"><path d="M1.2 1.6Q1.2 0.9 1.9 0.9H4.1L5.3 2.3H9.7Q10.4 2.3 10.4 3V7.9Q10.4 8.6 9.7 8.6H1.9Q1.2 8.6 1.2 7.9Z" fill="none" stroke="#4d4d4d" stroke-width="1"/></svg></div>
<div class="av" style="top:702.00px"><svg width="12" height="12" viewBox="0 0 12 12"><circle cx="6" cy="6" r="5.2" fill="none" stroke="#555" stroke-width="0.9"/><circle cx="6" cy="4.8" r="1.8" fill="none" stroke="#555" stroke-width="0.9"/><path d="M2.6 9.6c0.8-1.4 2-2 3.4-2s2.6 0.6 3.4 2" fill="none" stroke="#555" stroke-width="0.9"/></svg></div>
<div class="tt who" style="top:706.00px"><span style="letter-spacing:-0.007px">Jawwad Ul Gohar</span></div>
<div class="rb" style="top:765.00px"></div>
<div class="cb" style="top:740.00px"></div>
<div class="tt ttl" style="top:741.00px"><span style="letter-spacing:0.076px">HTTP requests explained: how they work</span></div>
<div class="tt kw" style="top:741.00px"><span style="letter-spacing:-0.111px">HTTP requests</span></div>
<div class="bd gen" style="top:739.90px">GENERATED</div>
<div class="bd t1" style="top:739.90px;left:1001.15px;width:60.5px">ONE SHOT</div>
<div class="bd dr" style="top:739.90px">DRAFT</div>
<div class="fo" style="top:741.70px"><svg width="12" height="10" viewBox="0 0 12 10"><path d="M1.2 1.6Q1.2 0.9 1.9 0.9H4.1L5.3 2.3H9.7Q10.4 2.3 10.4 3V7.9Q10.4 8.6 9.7 8.6H1.9Q1.2 8.6 1.2 7.9Z" fill="none" stroke="#4d4d4d" stroke-width="1"/></svg></div>
<div class="av" style="top:737.00px"><svg width="12" height="12" viewBox="0 0 12 12"><circle cx="6" cy="6" r="5.2" fill="none" stroke="#555" stroke-width="0.9"/><circle cx="6" cy="4.8" r="1.8" fill="none" stroke="#555" stroke-width="0.9"/><path d="M2.6 9.6c0.8-1.4 2-2 3.4-2s2.6 0.6 3.4 2" fill="none" stroke="#555" stroke-width="0.9"/></svg></div>
<div class="tt who" style="top:741.00px"><span style="letter-spacing:-0.007px">Jawwad Ul Gohar</span></div>

<div class="tt" style="left:241.6px;top:772.5px;color:#333">1 - 15 / 45</div>
<div class="pg" style="left:1404.3px;color:#aaa;border-color:#eee">&#8249;</div>
<div class="pg" style="left:1430.3px;background:#2b211f;border-color:#2b211f;color:#fff">1</div>
<div class="pg" style="left:1457.3px">2</div>
<div class="pg" style="left:1483.3px">3</div>
<div class="pg" style="left:1509.8px;width:20.5px">&#8250;</div>
<div class="abs" style="left:1499.3px;top:766.2px;width:32.2px;height:32.2px;border-radius:50%;background:#fff;border:1px solid #dadada;box-shadow:0 1px 3px rgba(0,0,0,0.1)"></div>
<svg class="abs" style="left:1510.5px;top:776px" width="10" height="15" viewBox="0 0 10 15"><path d="M1.6 4.6A3.4 3.4 0 1 1 6.6 7.3C5.5 8 5 8.6 5 9.9V10.6" fill="none" stroke="#111" stroke-width="1.25" stroke-linecap="round"/><circle cx="5" cy="13.1" r="0.85" fill="#111"/></svg>

</body></html>
